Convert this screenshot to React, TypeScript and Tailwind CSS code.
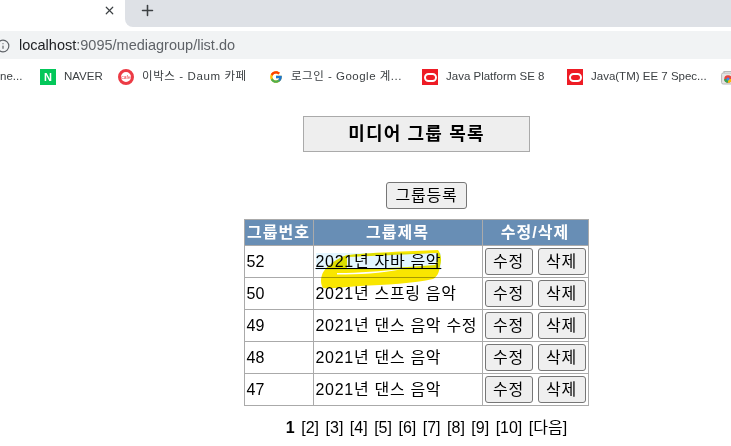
import React from "react";
import { FcGoogle } from "react-icons/fc";
import { X, Plus, Info } from "lucide-react";

const font = { fontFamily: '"Liberation Sans","Noto Sans CJK KR",sans-serif' };

function Oracle() {
  return (
    <span className="flex h-4 w-4 items-center justify-center bg-[#ee1c25]">
      <span className="h-[9px] w-[13px] rounded-[5px] border-2 border-white bg-[#ee1c25]" />
    </span>
  );
}

function Bookmark({ icon, label, className, labelClass = "" }: { icon: React.ReactNode; label: string; className: string; labelClass?: string }) {
  return (
    <div className={`flex shrink-0 items-center gap-2 ${className}`}>
      {icon}
      <span className={`whitespace-nowrap text-[#3c4043] ${labelClass}`}>{label}</span>
    </div>
  );
}

function Btn({ label, className = "" }: { label: string; className?: string }) {
  return (
    <button className={`h-[27px] rounded-[3px] border border-[#767676] bg-[#efefef] text-[16px] leading-none tracking-[0.8px] text-black ${className}`}>
      {label}
    </button>
  );
}

const rows = [
  ["52", "2021년 자바 음악"],
  ["50", "2021년 스프링 음악"],
  ["49", "2021년 댄스 음악 수정"],
  ["48", "2021년 댄스 음악"],
  ["47", "2021년 댄스 음악"],
];

export default function App() {
  return (
    <div className="relative h-[446px] w-[731px] overflow-hidden bg-white" style={font}>
      <div className="flex h-[27px] bg-white">
        <div className="flex w-[125px] items-center justify-end pb-[7px] pr-[9px]">
          <X size={13} strokeWidth={2.2} className="text-[#3c4043]" />
        </div>
        <div className="flex flex-1 items-center rounded-bl-[8px] bg-[#dee1e6] pb-[7px] pl-[14px]">
          <Plus size={17} strokeWidth={2.2} className="text-[#3c4043]" />
        </div>
      </div>
      <div className="mt-[4px] flex h-[28px] items-center gap-[9px] bg-[#f1f3f4] pt-[1px]">
        <Info size={14} strokeWidth={2} className="ml-[-4px] text-[#5f6368]" />
        <span className="text-[14.5px] text-[#5f6368]">
          <span className="text-[#202124]">localhost</span>:9095/mediagroup/list.do
        </span>
      </div>
      <div className="flex h-[36px] items-center text-[11.5px] text-[#3c4043]">
        <span className="w-[40px] shrink-0 whitespace-nowrap">ne...</span>
        <Bookmark
          className="w-[78px]"
          label="NAVER"
          icon={
            <span className="flex h-4 w-4 items-center justify-center bg-[#03c75a] text-[11px] font-bold leading-none text-white">N</span>
          }
        />
        <Bookmark
          className="w-[151px]"
          labelClass="tracking-[0.6px]"
          label="이박스 - Daum 카페"
          icon={
            <span className="flex h-4 w-4 items-center justify-center rounded-full border-[3px] border-[#ec3b45] bg-white text-[5px] leading-none text-[#ec3b45]">
              cafe
            </span>
          }
        />
        <Bookmark className="w-[153px]" labelClass="tracking-[0.5px]" label="로그인 - Google 계..." icon={<FcGoogle size={14} />} />
        <Bookmark className="w-[145px]" label="Java Platform SE 8" icon={<Oracle />} />
        <Bookmark className="w-[154px]" label="Java(TM) EE 7 Spec..." icon={<Oracle />} />
        <svg width="14" height="15" viewBox="0 0 14 15" className="shrink-0">
          <path d="M3 3V1.5h8V3" fill="none" stroke="#b8b8b8" strokeWidth="1.2" />
          <rect x="0.6" y="3" width="12.8" height="11" rx="1.5" fill="#e6e6e6" stroke="#b8b8b8" />
          <circle cx="7" cy="9" r="3.8" fill="#e8453c" />
          <path d="M7 9 L3.2 9 A3.8 3.8 0 0 0 7 12.8 Z" fill="#34a853" />
          <path d="M7 9 L7 12.8 A3.8 3.8 0 0 0 10.8 9 Z" fill="#fbbc05" />
          <circle cx="7" cy="9" r="1.5" fill="#4285f4" />
        </svg>
      </div>

      <div className="flex flex-col items-center pl-[102px]">
        <div className="mt-[21px] flex h-[36px] w-[227px] items-center justify-center border border-[#aaaaaa] bg-[#eeeeee] pt-[1px] text-[18px] font-bold tracking-[1.2px] text-black">
          미디어 그룹 목록
        </div>
        <Btn label="그룹등록" className="ml-[20px] mt-[30px] w-[81px]" />
        <table className="mt-[10px] ml-[-1px] w-[344px] table-fixed border-collapse text-[16px] text-black">
          <colgroup>
            <col className="w-[69px]" />
            <col className="w-[169px]" />
            <col className="w-[106px]" />
          </colgroup>
          <thead>
            <tr className="h-[26px] bg-[#688eb5] font-bold text-white">
              <th className="whitespace-nowrap border border-[#aaaaaa] p-0 tracking-[1px]">그룹번호</th>
              <th className="border border-[#aaaaaa] p-0 tracking-[1px]">그룹제목</th>
              <th className="border border-[#aaaaaa] p-0 tracking-[1px]">수정/삭제</th>
            </tr>
          </thead>
          <tbody>
            {rows.map(([id, title], i) => (
              <tr key={id} className="h-[32px]">
                <td className="border border-[#aaaaaa] pl-[2px]">{id}</td>
                <td className="whitespace-nowrap border border-[#aaaaaa] pl-[2px] tracking-[0.7px]">
                  {i === 0 ? <span className="bg-[#e3f6ff] underline">{title}</span> : title}
                </td>
                <td className="border border-[#aaaaaa] p-0">
                  <div className="flex justify-center gap-[5px]">
                    <Btn label="수정" className="w-[48px]" />
                    <Btn label="삭제" className="w-[48px]" />
                  </div>
                </td>
              </tr>
            ))}
          </tbody>
        </table>
        <div className="ml-[20px] mt-[10px] flex gap-[6.5px] text-[16px] text-black">
          <b>1</b>
          {["[2]", "[3]", "[4]", "[5]", "[6]", "[7]", "[8]", "[9]", "[10]", "[다음]"].map((t) => (
            <span key={t}>{t}</span>
          ))}
        </div>
      </div>

      <svg className="pointer-events-none absolute left-[315px] top-[250px] mix-blend-multiply" width="130" height="40" viewBox="0 0 130 40">
        <path
          fillRule="evenodd"
          d="M7 25 C9 18 22 8 32 5 C50 3 95 1 123 0 C126 4 127 10 125 16 C124 23 122 27 118 29 C100 33 70 35 45 36 C30 37 15 39 8 38 C5 33 6 28 7 25 Z M32 7 C60 6 95 4 122 3 C123 8 122 13 120 15 C95 17 60 19 32 19 Z M22 23 C45 23 65 21 88 19 C65 23.5 45 24.5 22 24.5 Z"
          fill="#f9e600"
        />
      </svg>
    </div>
  );
}
